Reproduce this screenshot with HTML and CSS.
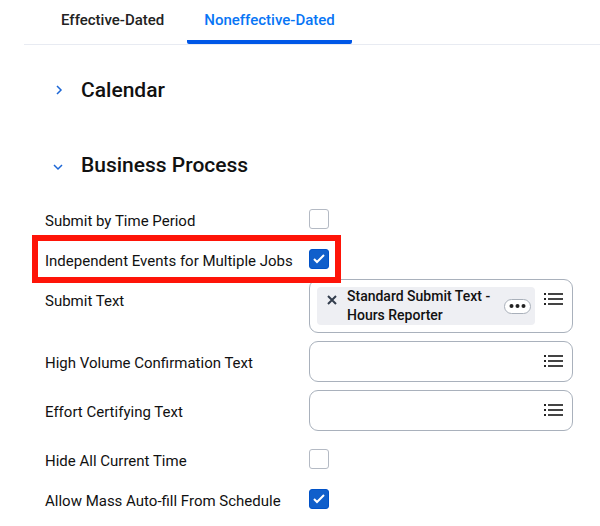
FILE: index.html
```html
<!DOCTYPE html>
<html lang="en">
<head>
  <meta charset="UTF-8">
  <title>Time Entry Setup</title>
  <meta name="viewport" content="width=device-width, initial-scale=1">
  <link rel="stylesheet" href="styles.css">
</head>
<body>
  <svg class="icon-defs" aria-hidden="true">
    <symbol id="icon-list" viewBox="0 0 20 16">
      <path d="M0 3h2M0 8h2M0 13h2" stroke="#222" stroke-width="2"/>
      <path d="M4 3h15M4 8h15M4 13h15" stroke="#444" stroke-width="2"/>
    </symbol>
  </svg>

  <nav class="tabs">
    <a class="tab" href="#effective">Effective-Dated</a>
    <a class="tab tab-active" href="#noneffective" aria-current="page">Noneffective-Dated</a>
  </nav>

  <main class="content">
    <h2 class="section-title">
      <button class="section-toggle" type="button" aria-expanded="false">
        <svg class="chevron" viewBox="0 0 12 12"><path d="M4 2l4 4-4 4"/></svg>
        Calendar
      </button>
    </h2>

    <h2 class="section-title">
      <button class="section-toggle" type="button" aria-expanded="true">
        <svg class="chevron" viewBox="0 0 12 12"><path d="M1 6l4 4 4-4"/></svg>
        Business Process
      </button>
    </h2>

    <form class="form">
      <div class="row">
        <label class="label" for="time-period">Submit by Time Period</label>
        <input class="checkbox" type="checkbox" id="time-period">
      </div>
      <div class="row row-highlight">
        <label class="label" for="independent">Independent Events for Multiple Jobs</label>
        <input class="checkbox" type="checkbox" id="independent" checked>
      </div>
      <div class="row row-prompt">
        <label class="label" for="submit-text">Submit Text</label>
        <div class="prompt">
          <div class="chip">
            <button class="chip-remove" type="button" aria-label="Remove">
              <svg viewBox="0 0 10 10"><path d="M1 1l8 8M9 1l-8 8"/></svg>
            </button>
            <span class="chip-text">Standard Submit Text - Hours Reporter</span>
            <button class="chip-more" type="button" aria-label="Related actions">
              <svg viewBox="0 0 18 6"><circle cx="3" cy="3" r="2"/><circle cx="9" cy="3" r="2"/><circle cx="15" cy="3" r="2"/></svg>
            </button>
          </div>
          <input class="prompt-input" type="text" id="submit-text">
          <button class="prompt-list" type="button" aria-label="Show list"><svg><use href="#icon-list"/></svg></button>
        </div>
      </div>
      <div class="row row-prompt">
        <label class="label" for="high-volume">High Volume Confirmation Text</label>
        <div class="prompt">
          <input class="prompt-input" type="text" id="high-volume">
          <button class="prompt-list" type="button" aria-label="Show list"><svg><use href="#icon-list"/></svg></button>
        </div>
      </div>
      <div class="row row-prompt">
        <label class="label" for="effort">Effort Certifying Text</label>
        <div class="prompt">
          <input class="prompt-input" type="text" id="effort">
          <button class="prompt-list" type="button" aria-label="Show list"><svg><use href="#icon-list"/></svg></button>
        </div>
      </div>
      <div class="row">
        <label class="label" for="hide-time">Hide All Current Time</label>
        <input class="checkbox" type="checkbox" id="hide-time">
      </div>
      <div class="row">
        <label class="label" for="auto-fill">Allow Mass Auto-fill From Schedule</label>
        <input class="checkbox" type="checkbox" id="auto-fill" checked>
      </div>
    </form>
  </main>
</body>
</html>
```
FILE: styles.css
```css
*,
*::after {
  box-sizing: border-box;
}
body {
  margin: 0;
  background: #fff;
  color: #111;
  font-family: Roboto, "Liberation Sans", sans-serif;
  font-size: 15px;
}
button {
  padding: 0;
  border: none;
  background: none;
  color: inherit;
  font: inherit;
  cursor: pointer;
}
svg {
  display: block;
  fill: none;
}
.icon-defs {
  position: absolute;
  width: 0;
  height: 0;
}

.tabs {
  display: flex;
  gap: 6px;
  height: 45px;
  margin-left: 24px;
  border-bottom: 1px solid #e8ebf2;
}
.tab {
  height: 44px;
  padding: 0 17px;
  line-height: 40px;
  font-weight: 500;
  color: #222;
  text-decoration: none;
}
.tab:first-child {
  padding-left: 37px;
}
.tab-active {
  color: #0875f5;
  border-bottom: 4px solid #0057e7;
  border-radius: 2px;
}

.content {
  display: flex;
  flex-direction: column;
  gap: 6px;
  padding: 10px 27px 0 45px;
}
.section-title {
  margin: 0;
  font-size: 21px;
  font-weight: 500;
}
.section-toggle {
  display: flex;
  align-items: center;
  gap: 16px;
  height: 69px;
  padding-left: 8px;
}
.chevron {
  width: 12px;
  height: 12px;
  stroke: #1b66d6;
  stroke-width: 1.5;
}
.form {
  margin-top: -6px;
}

.row {
  display: grid;
  grid-template-columns: 264px minmax(0, 1fr);
  align-items: center;
  min-height: 40px;
}
.row-highlight {
  position: relative;
}
/* frame drawn over the row and the edge of the next field */
.row-highlight::after {
  content: "";
  position: absolute;
  left: -13px;
  top: -4px;
  width: 309px;
  height: 48px;
  border: 6px solid #fe1408;
  pointer-events: none;
  z-index: 1;
}
.row-prompt {
  align-items: start;
  padding-bottom: 8px;
}
.label {
  padding-top: 3px;
  line-height: 20px;
}
.row-prompt .label {
  padding-top: 12px;
}

.checkbox {
  appearance: none;
  width: 20px;
  height: 20px;
  margin: 0;
  border: 1px solid #b4bac4;
  border-radius: 3px;
  background: #fff;
}
.checkbox:checked {
  border-color: #0052c8;
  background: #105fcb url("data:image/svg+xml,%3Csvg xmlns='http://www.w3.org/2000/svg' viewBox='0 0 18 18'%3E%3Cpath d='M4 9l3 3 7-7' fill='none' stroke='white' stroke-width='2'/%3E%3C/svg%3E") center / 18px no-repeat;
}

.prompt {
  display: flex;
  align-items: flex-start;
  min-height: 41px;
  padding: 7px 8px 7px 7px;
  border: 1px solid #a9b1bc;
  border-radius: 9px;
}
.prompt-input {
  flex: 1;
  min-width: 0;
  height: 25px;
  padding: 0;
  border: none;
  outline: none;
  background: none;
  font: inherit;
}
.prompt-list {
  width: 20px;
  height: 16px;
  margin-top: 4px;
}
.prompt-list svg {
  width: 20px;
  height: 16px;
}
.chip {
  display: flex;
  align-items: center;
  width: 218px;
  border-radius: 4px;
  background: #eeeff3;
}
.chip-remove {
  align-self: flex-start;
  width: 30px;
  padding: 8px 10px;
}
.chip-remove svg {
  width: 10px;
  height: 10px;
  stroke: #333d4c;
  stroke-width: 2;
}
.chip-text {
  flex: 1;
  font-size: 14px;
  font-weight: 500;
  line-height: 19px;
}
.chip-more {
  width: 27px;
  height: 15px;
  margin: 0 4px;
  padding: 0 3px;
  border: 1px solid #a9b0ba;
  border-radius: 8px;
  background: #fff;
}
.chip-more svg {
  width: 100%;
  height: 6px;
  fill: #222;
}
```
